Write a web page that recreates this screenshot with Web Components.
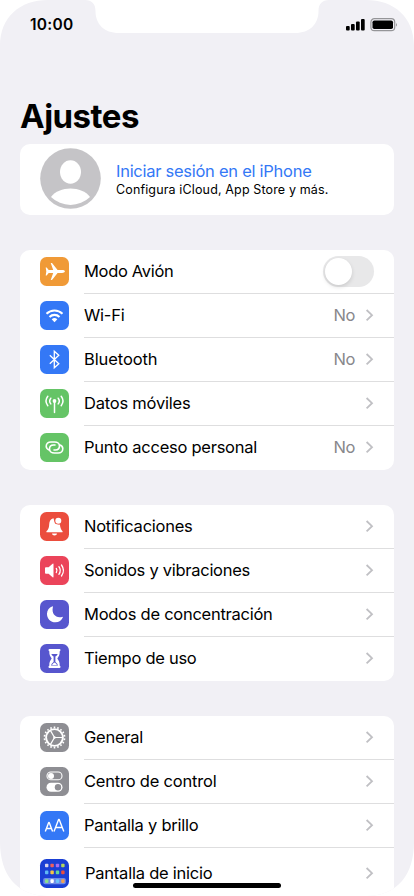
<!DOCTYPE html>
<html lang="es">
<head>
<meta charset="utf-8">
<title>Ajustes</title>
<style>
html,body{margin:0;background:#fff;height:896px;overflow:hidden}
body{font-family:Inter,"Liberation Sans",sans-serif;color:#000}
</style>
</head>
<body>
<phone-screen>
  <status-bar slot="status"></status-bar>
  <page-title><fit-text w="119">Ajustes</fit-text></page-title>
  <profile-card>
    <fit-text slot="name" w="195.500">Iniciar sesión en el iPhone</fit-text>
    <fit-text slot="detail" w="212.500">Configura iCloud, App Store y más.</fit-text>
  </profile-card>
  <settings-group>
    <settings-row icon="plane" color="#f09a37" control="switch"><fit-text w="89.500">Modo Avión</fit-text></settings-row>
    <settings-row icon="wifi" color="#3478f6"><fit-text w="40.500">Wi-Fi</fit-text><span slot="value">No</span></settings-row>
    <settings-row icon="bluetooth" color="#3478f6"><fit-text w="73.500">Bluetooth</fit-text><span slot="value">No</span></settings-row>
    <settings-row icon="antenna" color="#65c466"><fit-text w="106.500">Datos móviles</fit-text></settings-row>
    <settings-row icon="hotspot" color="#65c466"><fit-text w="173">Punto acceso personal</fit-text><span slot="value">No</span></settings-row>
  </settings-group>
  <settings-group>
    <settings-row icon="bell" color="#eb4d3d"><fit-text w="108.500">Notificaciones</fit-text></settings-row>
    <settings-row icon="speaker" color="#eb445a"><fit-text w="166">Sonidos y vibraciones</fit-text></settings-row>
    <settings-row icon="moon" color="#5756ce"><fit-text w="188.500">Modos de concentración</fit-text></settings-row>
    <settings-row icon="hourglass" color="#5756ce"><fit-text w="112.500">Tiempo de uso</fit-text></settings-row>
  </settings-group>
  <settings-group>
    <settings-row icon="gear" color="#8e8e93"><fit-text w="59">General</fit-text></settings-row>
    <settings-row icon="toggles" color="#8e8e93"><fit-text w="132.500">Centro de control</fit-text></settings-row>
    <settings-row icon="display" color="#3478f6"><fit-text w="114.500">Pantalla y brillo</fit-text></settings-row>
    <settings-row icon="grid" color="#1a3fd4" tall><fit-text w="127.500">Pantalla de inicio</fit-text></settings-row>
  </settings-group>
</phone-screen>

<script>
const define = (name, html, setup) => {
  const tpl = document.createElement('template');
  tpl.innerHTML = html;
  customElements.define(name, class extends HTMLElement {
    constructor() {
      super();
      this.attachShadow({ mode: 'open' }).append(tpl.content.cloneNode(true));
    }
    connectedCallback() { if (setup) setup(this, this.shadowRoot); }
  });
};

const gearTeeth = Array.from({ length: 18 }, (_, i) =>
  `<path d="M14.5 5.3V3.6" transform="rotate(${i * 20} 14.5 14.5)" stroke-width="1.6"/>`).join('');
const dots = [['#d9d5ee', '#f0605c', '#a66cf0', '#b4d65c'], ['#5fb8f5', '#f6c344', '#62d69b', '#eb4d3d'], ['#8be08b', '#fff', '#6cc3fa', '#f0a050']]
  .map((row, r) => row.map((c, i) => `<rect x="${5 + i * 5.4}" y="${[4.7, 11.6, 20.3][r]}" width="3.4" height="3.6" rx=".8" fill="${c}"/>`).join('')).join('');

const icons = {
  plane: '<path fill="#fff" d="M24.9 14.5c0-.9-1.5-1.4-2.8-1.4h-4.5L12.4 6.4c-.2-.3-.4-.4-.8-.4h-.9l2.5 7.1H8.7L6.9 10.8c-.2-.2-.3-.3-.6-.3h-.6l.6 4-.6 4h.6c.3 0 .4-.1.6-.3l1.8-2.3h4.5L10.700 23h.9c.4 0 .6-.1.8-.4l5.200-6.700h4.500c1.300 0 2.800-.5 2.800-1.400z"/>',
  wifi: '<g fill="none" stroke="#fff" stroke-width="2.100"><path d="M6.500 12.700a11.500 11.500 0 0 1 16 0"/><path d="M9.500 15.900a7.200 7.200 0 0 1 10 0"/></g><path fill="#fff" d="M11.700 18.300a4.200 4.200 0 0 1 5.600 0l-2.800 2.900z"/>',
  bluetooth: '<path fill="none" stroke="#fff" stroke-width="1.300" stroke-linejoin="miter" d="M9.800 10.200l9 8.500-4.500 4V6.300l4.500 4-9 8.500"/>',
  antenna: '<g fill="none" stroke="#fff" stroke-width="1.500" stroke-linecap="round"><path d="M14.500 12.500v11"/><path d="M10.800 9.200a4.600 4.600 0 0 0 0 5.700M18.200 9.200a4.600 4.600 0 0 1 0 5.700M7.800 7.300a7.700 7.700 0 0 0 0 9.400M21.200 7.300a7.700 7.700 0 0 1 0 9.400"/></g><circle cx="14.500" cy="12" r="1.900" fill="#fff"/>',
  hotspot: '<g fill="none" stroke="#fff" stroke-width="1.600" stroke-linecap="round"><path d="M9.500 17.200C7.500 16.500 6.200 15.200 6.200 13.300C6.200 10.800 8.200 9 10.900 9H14.700C17.500 9 19.500 10.800 19.500 13.100C19.500 15.400 17.800 17 15.400 17H14"/><path d="M19.500 11.800C21.500 12.500 22.800 13.800 22.800 15.700C22.800 18.200 20.800 20 18.100 20H14.300C11.500 20 9.500 18.200 9.500 15.900C9.500 13.600 11.200 12 13.600 12H15"/></g>',
  bell: '<path fill="#fff" d="M13.500 6.200C10.600 6.800 9.400 9.100 9.200 12.200C9 16.300 8.100 17.500 6.700 18.900C6 19.600 6.300 20.300 7.200 20.300H21.800C22.700 20.300 23 19.600 22.300 18.900C20.900 17.500 20.200 15.500 19.900 12.500L15 11.500zM12 21.400h5a2.500 2.100 0 0 1-5 0z"/><circle cx="18.300" cy="8.700" r="3.700" fill="#eb4d3d"/><circle cx="18.300" cy="8.700" r="3" fill="#fff"/>',
  speaker: '<path fill="#fff" d="M5 12.200q0-.9.900-.9h2.700l4-3.500q.9-.7.900.4v12.600q0 1.100-.9.400l-4-3.500H5.900q-.9 0-.9-.9z"/><g fill="none" stroke="#fff" stroke-width="1.300" stroke-linecap="round"><path d="M16.300 12.500a3.400 3.400 0 0 1 0 4M18.900 10.700a6.400 6.400 0 0 1 0 7.600M21.500 9a9.500 9.500 0 0 1 0 11"/></g>',
  moon: '<path fill="#fff" d="M12.500 6.300C8.900 7.500 7 10.500 7 14C7 18.700 10.700 22.300 15.400 22.300C18.900 22.300 21.800 20.400 22.900 17.300C22.900 16.900 22.600 16.700 22.100 16.900C16.300 18.700 11.200 14 12.900 7C13 6.500 12.900 6.200 12.500 6.300z"/>',
  hourglass: '<path fill="#fff" d="M9.500 5h10q1 0 1 1.100T19.700 7.300C19.900 11 18.700 12.600 17.300 14.500C18.700 16.400 19.900 18 19.700 21.700q.8.100.8 1.200T19.500 24H9.500q-1 0-1-1.100T9.300 21.700C9.100 18 10.300 16.400 11.700 14.500C10.300 12.600 9.100 11 9.300 7.300q-.8-.1-.8-1.200T9.500 5z"/><path d="M11.300 9.900h6.400q-.6 1.700-2.300 2.700v5.400q2.100 1.200 2.600 3.400h-7q.5-2.200 2.600-3.400v-5.400q-1.700-1-2.300-2.700z" fill="#5756ce"/><path d="M12 20.900q.8-1.600 2.500-2.300q1.700.7 2.500 2.300z" fill="#fff"/>',
  gear: `<g fill="none" stroke="#fff"><circle cx="14.500" cy="14.500" r="8.400" stroke-width="1.900"/>${gearTeeth}<path stroke-width="1.200" d="M14.500 14.500h8M14.500 14.500l-4-6.900M14.500 14.500l-4 6.900"/></g><circle cx="14.500" cy="14.500" r="1.200" fill="#fff"/>`,
  toggles: '<rect x="7" y="5" width="15" height="7.800" rx="3.900" fill="none" stroke="#fff" stroke-width="1.100"/><circle cx="11" cy="8.900" r="3" fill="#fff"/><rect x="6.500" y="15.700" width="16" height="9" rx="4.500" fill="#fff"/><circle cx="18" cy="20.200" r="3.200" fill="#8e8e93"/>',
  display: '<g fill="none" stroke="#fff" stroke-width="1.400" stroke-linejoin="round"><path d="M5.300 20.500l3.400-9h.5l3.400 9M6.500 17.500h4.900M14 20.500l4.600-12h.6l4.600 12M15.500 16.500h6.800"/></g>',
  grid: `<rect x="3.200" y="19" width="22.600" height="6.300" rx="1.800" fill="#6f8be8"/>${dots}`
};

/* Single-line text tracked so that its advance equals the width in "w". */
define('fit-text', `<style>:host{display:inline-block;white-space:nowrap}span{display:inline-block}</style><span><slot></slot></span>`,
  (el, root) => {
    const span = root.querySelector('span');
    const fit = () => {
      span.style.letterSpacing = '0px';
      const n = el.textContent.length;
      span.style.letterSpacing = ((+el.getAttribute('w') - span.getBoundingClientRect().width) / n) + 'px';
    };
    queueMicrotask(fit);
  });

define('phone-screen', `<style>
:host{display:flex;flex-direction:column;position:relative;box-sizing:border-box;width:414px;height:896px;padding:0 20px;overflow:hidden;background:#f1f0f5;
clip-path:path("M0 46C0 17 20 0 48 0H85C92 0 95.500 4 95.500 11C95.500 24 104 33 119 33H295C310 33 318.500 24 318.500 11C318.500 4 322 0 329 0H366C394 0 414 17 414 46V842C414 874 398 896 366 896H48C16 896 0 874 0 842Z")}
.home{position:absolute;left:133px;top:883px;width:148px;height:5px;border-radius:3px;background:#000}
</style><slot name="status"></slot><slot></slot><div class="home"></div>`);

define('status-bar', `<style>
:host{display:flex;height:96px;flex:none;box-sizing:border-box;padding:15px 0 0 10px;justify-content:space-between;align-items:flex-start;margin-right:-4px}
.time{font-size:15.500px;line-height:20px;font-weight:600}
svg{display:block;margin-top:2px}
</style><fit-text class="time" w="43.500">10:00</fit-text>
<svg width="53" height="16" viewBox="0 0 53 16"><g fill="#000"><rect x="1" y="9" width="3.700" height="4.600" rx="1"/><rect x="6" y="7" width="3.700" height="6.600" rx="1"/><rect x="11" y="4.500" width="3.700" height="9.100" rx="1"/><rect x="16" y="2" width="3.700" height="11.600" rx="1"/><rect x="27.500" y="3.500" width="20.500" height="8.500" rx="1.800"/><path d="M51 5.700q1.700 2-0 4z" opacity=".45"/></g><rect x="25.900" y="1.700" width="23.800" height="12" rx="3.500" fill="none" stroke="#000" stroke-opacity=".38" stroke-width="1.200"/></svg>`);

define('page-title', `<style>:host{display:block;height:48px;flex:none;font-size:33px;line-height:41px;font-weight:680}</style><slot></slot>`);

define('profile-card', `<style>
:host{display:flex;flex:none;align-items:center;box-sizing:border-box;height:70.500px;padding:0 20px;gap:15px;background:#fff;border-radius:10px;margin-bottom:35px}
svg{display:block;flex:none;margin-top:-1px}
.copy{display:flex;flex-direction:column;padding-top:1px}
.name{font-size:16.500px;line-height:20px;color:#3478f6}
.detail{font-size:12.500px;line-height:17px}
</style>
<svg width="61" height="61" viewBox="0 0 61 61"><circle cx="30.500" cy="30.500" r="30.300" fill="#c5c4c7"/><ellipse cx="30.500" cy="24" rx="10.500" ry="11.700" fill="#fff"/><path fill="#fff" d="M11 49C19 37.500 42 37.500 50 49A28 28 0 0 1 11 49z"/></svg>
<div class="copy"><div class="name"><slot name="name"></slot></div><div class="detail"><slot name="detail"></slot></div></div>`);

define('settings-group', `<style>:host{display:block;flex:none;background:#fff;border-radius:10px;margin-bottom:35px}</style><slot></slot>`);

define('settings-row', `<style>
:host{display:flex;height:44px;box-sizing:border-box;padding-left:20px;gap:15px;align-items:center;font-size:16.500px;line-height:22px}
:host([tall]){height:64px;padding-bottom:12px}
.tile{width:29px;height:29px;border-radius:6.500px;flex:none;overflow:hidden}
svg{display:block}
.body{display:flex;flex:1;align-self:stretch;align-items:center;box-sizing:border-box;border-bottom:1px solid #dededf;padding:1px 20px 0 0}
:host(:last-child) .body{border-color:transparent}
:host([tall]) .body{padding-left:1px}
.label{flex:1}
.label,.value{margin-top:-1px}
.value{color:#88888c;letter-spacing:-.4px;margin-right:10px}
.chevron{margin-top:-1px}
.switch{display:block;width:51px;height:31px;border-radius:16px;background:#e8e8e9;box-sizing:border-box;padding:2px;margin-top:-1px}
.knob{display:block;width:27px;height:27px;border-radius:50%;background:#fff;box-shadow:0 2px 4px rgba(0,0,0,.13)}
[hidden]{display:none}
</style>
<div class="tile"></div><div class="body"><div class="label"><slot></slot></div><div class="value"><slot name="value"></slot></div>
<svg class="chevron" width="9" height="14" viewBox="0 0 9 14"><path d="M1.600 2L7 7.200L1.600 12.400" fill="none" stroke="#c0c0c4" stroke-width="1.800"/></svg><span class="switch" hidden><i class="knob"></i></span></div>`,
  (el, root) => {
    const tile = root.querySelector('.tile');
    tile.style.background = el.getAttribute('color');
    tile.innerHTML = `<svg width="29" height="29" viewBox="0 0 29 29">${icons[el.getAttribute('icon')]}</svg>`;
    if (el.getAttribute('control') === 'switch') {
      root.querySelector('.chevron').style.display = 'none';
      root.querySelector('.value').style.display = 'none';
      root.querySelector('.switch').hidden = false;
    }
  });
</script>
</body>
</html>
